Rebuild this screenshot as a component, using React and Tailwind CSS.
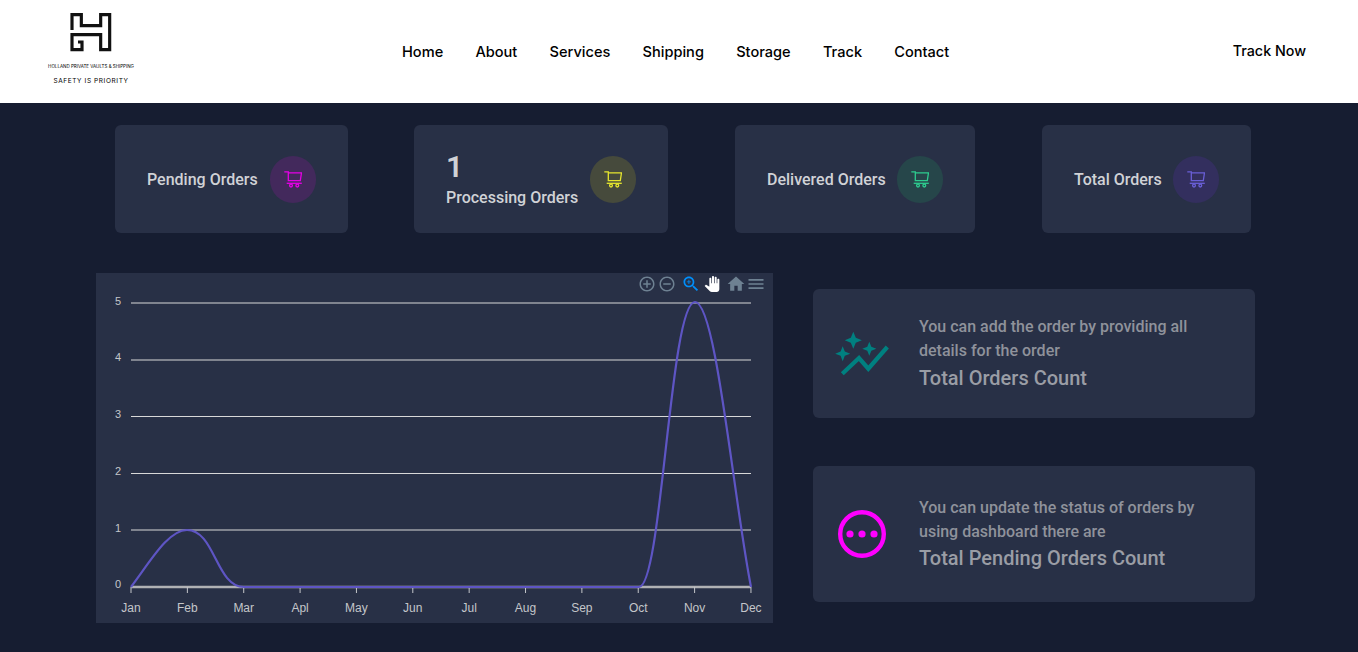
import React from "react";

const navLinks = ["Home", "About", "Services", "Shipping", "Storage", "Track", "Contact"];
const months = ["Jan", "Feb", "Mar", "Apl", "May", "Jun", "Jul", "Aug", "Sep", "Oct", "Nov", "Dec"];

const stats = [
  { label: "Pending Orders", size: "mr-[66px] w-[233px]", circle: "bg-[#43295c]", icon: "text-[#e600e6]" },
  { label: "Processing Orders", value: "1", size: "mr-[67px] w-[254px]", circle: "bg-[#464a3c]", icon: "text-[#e6e62e]" },
  { label: "Delivered Orders", size: "mr-[67px] w-[240px]", circle: "bg-[#26464a]", icon: "text-[#2ecc8f]" },
  { label: "Total Orders", size: "w-[209px]", circle: "bg-[#332f5e]", icon: "text-[#6a5fd6]" },
];

function Logo() {
  return (
    <div className="flex w-[90px] flex-col items-center">
      <svg width="50" height="48" viewBox="0 0 150 144" fill="none" stroke="#111" strokeWidth="9.500">
        <path d="M18 66V20H46V53H104V20H131V125H104V80H18V125H48V102H36" />
      </svg>
      <span className="mt-[8px] whitespace-nowrap text-[4.5px] leading-[6px] text-black">
        HOLLAND PRIVATE VAULTS & SHIPPING
      </span>
      <span className="mt-[7px] whitespace-nowrap text-[6.5px] leading-[8px] tracking-[0.6px] text-black">
        SAFETY IS PRIORITY
      </span>
    </div>
  );
}

function Header() {
  return (
    <header className="flex h-[103px] items-start bg-white font-['Inter',sans-serif]">
      <div className="ml-[46px] mt-[8px]">
        <Logo />
      </div>
      <nav className="ml-[266px] mt-[42px] flex gap-[32.2px] text-[14.6px] font-medium leading-[20px] text-black">
        {navLinks.map((link) => (
          <a key={link}>{link}</a>
        ))}
      </nav>
      <a className="ml-auto mr-[52px] mt-[41px] text-[14.3px] font-medium leading-[20px] text-black">Track Now</a>
    </header>
  );
}

function CartIcon({ className }) {
  return (
    <svg width="18" height="17" viewBox="0 0 18 17" fill="none" stroke="currentColor" strokeWidth="1.300" className={className}>
      <path d="M0.300 0.800H4.300V9.700H16.300L17.500 1.800H4.300" />
      <path d="M2.700 12.300H17.800" />
      <circle cx="7" cy="14.600" r="1.400" />
      <circle cx="13.300" cy="14.600" r="1.400" />
    </svg>
  );
}

function StatCard({ label, value, size, circle, icon }) {
  return (
    <div className={`flex items-center justify-between rounded-md bg-[#283046] px-8 ${size}`}>
      <div className="text-[#d0d2d6]">
        {value && <div className="text-[30px] font-semibold leading-[38px]">{value}</div>}
        <div className={`text-[16px] font-medium leading-[24px] ${value ? "" : "pt-[2px]"}`}>{label}</div>
      </div>
      <div className={`flex h-[47px] w-[46px] items-center justify-center rounded-full ${circle}`}>
        <CartIcon className={icon} />
      </div>
    </div>
  );
}

const X_START = 35;
const X_STEP = 56.36;

function ToolIcon({ d, className }) {
  return (
    <svg viewBox="0 0 24 24" className={className} fill="currentColor">
      <path d={d} />
    </svg>
  );
}

function Toolbar() {
  return (
    <div className="absolute right-[7px] top-[1px] flex items-center text-[#6e8192]">
      <ToolIcon
        className="h-[18px] w-[18px]"
        d="M13 7h-2v4H7v2h4v4h2v-4h4v-2h-4V7zm-1-5C6.48 2 2 6.48 2 12s4.48 10 10 10 10-4.48 10-10S17.52 2 12 2zm0 18c-4.41 0-8-3.59-8-8s3.59-8 8-8 8 3.59 8 8-3.59 8-8 8z"
      />
      <ToolIcon
        className="ml-[2px] h-[18px] w-[18px]"
        d="M7 11v2h10v-2H7zm5-9C6.48 2 2 6.48 2 12s4.48 10 10 10 10-4.48 10-10S17.52 2 12 2zm0 18c-4.41 0-8-3.59-8-8s3.59-8 8-8 8 3.59 8 8-3.59 8-8 8z"
      />
      <ToolIcon
        className="ml-[5px] h-[20px] w-[20px] text-[#008ffb]"
        d="M15.500 14h-.79l-.28-.27C15.410 12.590 16 11.110 16 9.500 16 5.910 13.090 3 9.500 3S3 5.910 3 9.500 5.910 16 9.500 16c1.610 0 3.090-.59 4.230-1.570l.27.28v.79l5 4.990L20.490 19l-4.990-5zm-6 0C7.010 14 5 11.990 5 9.500S7.010 5 9.500 5 14 7.010 14 9.500 11.990 14 9.500 14zM12 10h-2v2H9v-2H7V9h2V7h1v2h2v1z"
      />
      <ToolIcon
        className="ml-[3px] h-[16px] w-[16px] text-white"
        d="M23 5.500V20c0 2.200-1.800 4-4 4h-7.300c-1.080 0-2.100-.43-2.850-1.190L1 14.830s1.260-1.230 1.300-1.250c.22-.19.49-.29.79-.29.22 0 .42.06.6.16.04.01 4.310 2.460 4.310 2.460V4c0-.83.67-1.500 1.500-1.500S11 3.170 11 4v7h1V1.500c0-.83.67-1.500 1.500-1.500S15 .67 15 1.500V11h1V2.500c0-.83.67-1.500 1.500-1.500s1.500.67 1.500 1.500V11h1V5.500c0-.83.67-1.500 1.500-1.500s1.500.67 1.500 1.500z"
      />
      <ToolIcon className="ml-[6px] h-[20px] w-[20px]" d="M10 20v-6h4v6h5v-8h3L12 3 2 12h3v8z" />
      <ToolIcon className="h-[20px] w-[20px]" d="M3 18h18v-2H3v2zm0-5h18v-2H3v2zm0-7v2h18V6H3z" />
    </div>
  );
}

function OrdersChart() {
  const gridY = [314, 257, 200.5, 143.5, 87, 30];
  const labelY = [315, 259, 202, 145, 88, 32];
  return (
    <div className="relative h-[350px] w-[677px] bg-[#283046]">
      <Toolbar />
      <svg width="677" height="350" className="block font-['Liberation_Sans',sans-serif]">
        {gridY.map((y, i) => (
          <g key={y}>
            <line x1="35" x2="655" y1={y} y2={y} stroke={i === 0 ? "#b0b1b4" : "#d8d8d8"} strokeWidth={i === 0 ? 2.5 : 1} />
            <text x="25" y={labelY[i]} textAnchor="end" fontSize="11" fill="#c4c6ca">
              {i}
            </text>
          </g>
        ))}
        {months.map((m, i) => {
          const x = X_START + i * X_STEP;
          return (
            <g key={m}>
              <line x1={x} x2={x} y1="314" y2="320" stroke="#c4c6ca" />
              <text x={x} y="339" textAnchor="middle" fontSize="12" fill="#c4c6ca">
                {m}
              </text>
            </g>
          );
        })}
        <path
          d="M35 314C54 289 72 257 91 257C119 257 120 314 148 314L543 314C566 314 574 29 599 29C620 29 637 222 655 314"
          fill="none"
          stroke="#5e55c4"
          strokeWidth="2.200"
        />
      </svg>
    </div>
  );
}

function SparkleIcon() {
  return (
    <svg width="54" height="46" viewBox="0 0 54 46" fill="#008080">
      <path d="M18.300 0.800L20.800 6.800L26.800 9.300L20.800 11.800L18.300 17.800L15.800 11.800L9.800 9.300L15.800 6.800Z" />
      <path d="M7.700 15.200L9.800 20.600L15.200 22.700L9.800 24.800L7.700 30.200L5.600 24.800L0.200 22.700L5.600 20.600Z" />
      <path d="M34.300 10.700L36.300 15.700L41.300 17.700L36.300 19.700L34.300 24.700L32.300 19.700L27.300 17.700L32.300 15.700Z" />
      <path d="M7.300 42.700L24 27L33.300 37.700L52.300 16" fill="none" stroke="#008080" strokeWidth="4.200" />
    </svg>
  );
}

function DotsIcon() {
  return (
    <svg width="50" height="50" viewBox="0 0 50 50" className="ml-[2px]">
      <circle cx="25" cy="25" r="21.800" fill="none" stroke="#ff00ff" strokeWidth="4.400" />
      <circle cx="13" cy="25" r="3.600" fill="#ff00ff" />
      <circle cx="25" cy="25" r="3.600" fill="#ff00ff" />
      <circle cx="37" cy="25" r="3.600" fill="#ff00ff" />
    </svg>
  );
}

function InfoCard({ icon, text, title, height, titleLeading }) {
  return (
    <div className={`flex items-center rounded-md bg-[#283046] ${height}`}>
      <div className="flex w-[106px] shrink-0 pl-[22px]">{icon}</div>
      <div className="w-[290px]">
        <p className="text-[16px] font-medium leading-[24px] text-[#8f929b]">{text}</p>
        <p className={`text-[20px] font-medium text-[#9a9da5] ${titleLeading}`}>{title}</p>
      </div>
    </div>
  );
}

export default function App() {
  return (
    <div className="min-h-[652px] bg-[#161d31] font-['Roboto',sans-serif]">
      <Header />
      <main>
        <section className="mt-[22px] flex h-[108px] pl-[115px]">
          {stats.map((s) => (
            <StatCard key={s.label} {...s} />
          ))}
        </section>
        <section className="mt-[40px] flex gap-[40px] pl-[96px]">
          <OrdersChart />
          <div className="mt-[16px] flex w-[442px] flex-col gap-[48px]">
            <InfoCard
              height="h-[129px]"
              titleLeading="leading-[30px]"
              icon={<SparkleIcon />}
              text="You can add the order by providing all details for the order"
              title="Total Orders Count"
            />
            <InfoCard
              height="h-[136px]"
              titleLeading="leading-[28px]"
              icon={<DotsIcon />}
              text="You can update the status of orders by using dashboard there are"
              title="Total Pending Orders Count"
            />
          </div>
        </section>
      </main>
    </div>
  );
}
